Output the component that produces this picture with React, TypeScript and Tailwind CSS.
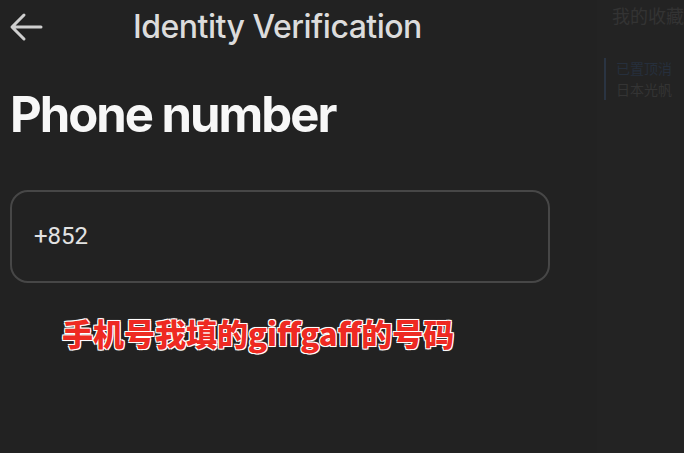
export default function App() {
  return (
    <div className="flex h-[453px] w-[684px] overflow-hidden bg-[#222222] font-['Inter','Noto_Sans_CJK_SC',sans-serif]">
      {/* phone screen */}
      <div className="flex w-[597px] shrink-0 flex-col">
        <div className="flex h-[58px] items-center">
          <svg className="ml-[9px] mt-[-4px]" width="34" height="30" viewBox="0 0 34 30" fill="none">
            <path d="M32 15H4M15 3L3 15l12 12" stroke="#cfcfcf" strokeWidth="3" strokeLinecap="round" strokeLinejoin="round" />
          </svg>
          <h1 className="ml-[90px] mt-[-5px] text-[32px] font-medium tracking-[-0.5px] text-[#dcdcdc]">
            Identity Verification
          </h1>
        </div>
        <h2 className="ml-[10px] mt-[27px] text-[49px] font-bold leading-[60px] tracking-[-2px] text-[#f7f7f7]">
          Phone number
        </h2>
        <div className="ml-[10px] mt-[45px] flex h-[93px] w-[540px] items-center rounded-[18px] border-[2px] border-[#474747] pl-[22px]">
          <span className="mt-[-2px] font-['Roboto',sans-serif] text-[24px] text-[#e2e2e2]">+852</span>
        </div>
        <p className="ml-[62px] mt-[30px] whitespace-nowrap font-['Noto_Sans_CJK_SC',sans-serif] text-[31px] font-black leading-[40px] text-[#ee2a22] [text-shadow:0_0_2px_#fff,1px_1px_0_#fff,-1px_-1px_0_#fff,1px_-1px_0_#fff,-1px_1px_0_#fff]">
          手机号我填的giffgaff的号码
        </p>
      </div>
      {/* background window on the right */}
      <div className="flex min-w-0 flex-1 flex-col overflow-hidden bg-[#232323] font-['Noto_Sans_CJK_SC',sans-serif]">
        <div className="ml-[15px] mt-[3px] whitespace-nowrap text-[18px] leading-[24px] text-[#333333]">我的收藏</div>
        <div className="ml-[7px] mt-[31px] flex border-l-[2px] border-[#2a3442] pl-[10px]">
          <div className="flex flex-col whitespace-nowrap text-[14px] leading-[21px]">
            <span className="text-[#262f3c]">已置顶消</span>
            <span className="text-[#343434]">日本光帆</span>
          </div>
        </div>
      </div>
    </div>
  );
}
